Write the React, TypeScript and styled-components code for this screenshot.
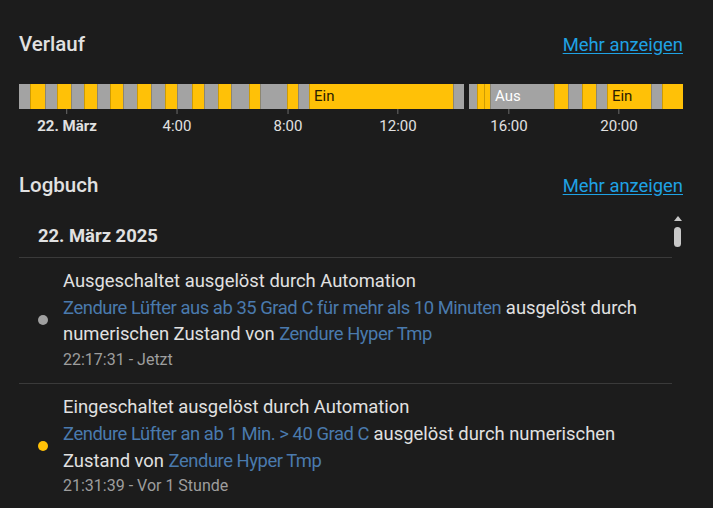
import styled, { createGlobalStyle } from "styled-components";

const GlobalStyle = createGlobalStyle`
    html, body {
        margin: 0;
        padding: 0;
        background: #1c1c1c;
    }
    body {
        font-family: Roboto, "Noto Sans", "Liberation Sans", sans-serif;
        color: #e1e1e1;
    }
`;

type State = "on" | "off" | "gap";

// [start px, end px, state, label]
const segments: [number, number, State, string?][] = [
    [19, 30, "off"],
    [30, 45, "on"],
    [45, 57, "off"],
    [57, 71, "on"],
    [71, 84, "off"],
    [84, 97, "on"],
    [97, 110, "off"],
    [110, 123, "on"],
    [123, 137, "off"],
    [137, 151, "on"],
    [151, 165, "off"],
    [165, 177, "on"],
    [177, 192, "off"],
    [192, 204, "on"],
    [204, 218, "off"],
    [218, 231, "on"],
    [231, 249, "off"],
    [249, 260, "on"],
    [260, 287, "off"],
    [287, 298, "on"],
    [298, 309, "off"],
    [309, 453, "on", "Ein"],
    [453, 464, "off"],
    [464, 469, "gap"],
    [469, 477, "off"],
    [477, 484, "on"],
    [484, 490, "on"],
    [490, 554, "off", "Aus"],
    [554, 568, "on"],
    [568, 582, "off"],
    [582, 596, "on"],
    [596, 607, "off"],
    [607, 651, "on", "Ein"],
    [651, 662, "off"],
    [662, 683, "on"],
];

const BAR_START = 19;
const BAR_WIDTH = 664;

const ticks = [
    { x: 67, label: "22. März", bold: true },
    { x: 177, label: "4:00" },
    { x: 288, label: "8:00" },
    { x: 398, label: "12:00" },
    { x: 509, label: "16:00" },
    { x: 619, label: "20:00" },
];

const entries = [
    {
        state: "off" as const,
        title: "Ausgeschaltet ausgelöst durch Automation",
        link: "Zendure Lüfter aus ab 35 Grad C für mehr als 10 Minuten",
        time: "22:17:31 - Jetzt",
    },
    {
        state: "on" as const,
        title: "Eingeschaltet ausgelöst durch Automation",
        link: "Zendure Lüfter an ab 1 Min. > 40 Grad C",
        time: "21:31:39 - Vor 1 Stunde",
    },
];

const pct = (px: number) => `${(px / BAR_WIDTH) * 100}%`;

export default function App() {
    return (
        <>
            <GlobalStyle />
            <Page>
                <SectionHeader>
                    <Title>Verlauf</Title>
                    <MoreLink href="#">Mehr anzeigen</MoreLink>
                </SectionHeader>

                <Bar>
                    {segments.map(([a, b, s, label], i) => (
                        <Segment
                            key={i}
                            $state={s}
                            $edge={i > 0 && segments[i - 1][2] !== "gap" && s !== "gap"}
                            $labelled={!!label}
                            style={{ width: pct(b - a) }}
                        >
                            {label}
                        </Segment>
                    ))}
                </Bar>
                <Axis>
                    {ticks.map((t) => (
                        <Tick key={t.label} style={{ left: pct(t.x - BAR_START) }}>
                            <TickMark />
                            <TickLabel $bold={t.bold}>{t.label}</TickLabel>
                        </Tick>
                    ))}
                </Axis>

                <SectionHeader $spaced>
                    <Title>Logbuch</Title>
                    <MoreLink href="#">Mehr anzeigen</MoreLink>
                </SectionHeader>

                <LogArea>
                    <LogList>
                        <DateRow>22. März 2025</DateRow>
                        {entries.map((e, i) => (
                            <Entry key={i} $last={i === entries.length - 1}>
                                <Dot $state={e.state} />
                                <EntryBody>
                                    <Message>
                                        {e.title}
                                        <br />
                                        <EntityLink>{e.link}</EntityLink> ausgelöst durch
                                        numerischen Zustand von{" "}
                                        <EntityLink>Zendure Hyper Tmp</EntityLink>
                                    </Message>
                                    <Time>{e.time}</Time>
                                </EntryBody>
                            </Entry>
                        ))}
                    </LogList>
                    <ScrollTrack>
                        <ScrollArrow />
                        <ScrollThumb />
                    </ScrollTrack>
                </LogArea>
            </Page>
        </>
    );
}

const Page = styled.div`
    min-height: 100vh;
    box-sizing: border-box;
    padding: 28px 30px 0 19px;
    background: #1c1c1c;
    overflow: hidden;
`;

const SectionHeader = styled.div<{ $spaced?: boolean }>`
    display: flex;
    align-items: center;
    justify-content: space-between;
    height: 32px;
    margin-top: ${(p) => (p.$spaced ? "30px" : "0")};
`;

const Title = styled.h2`
    margin: 0;
    font-size: 20.5px;
    font-weight: 500;
    color: #e1e1e1;
`;

const MoreLink = styled.a`
    font-size: 18.4px;
    color: #1fa2e4;
    text-decoration: underline;
    text-underline-offset: 2px;
`;

const Bar = styled.div`
    display: flex;
    height: 25px;
    margin-top: 24px;
`;

const Segment = styled.div<{ $state: State; $edge: boolean; $labelled: boolean }>`
    flex: none;
    box-sizing: border-box;
    overflow: hidden;
    white-space: nowrap;
    padding-left: ${(p) => (p.$labelled ? "4px" : "0")};
    font-size: 15px;
    line-height: 25px;
    background: ${(p) =>
        p.$state === "on" ? "#ffc107" : p.$state === "off" ? "#a3a3a3" : "transparent"};
    color: ${(p) => (p.$state === "on" ? "#2a2000" : "#ffffff")};
    border-left: ${(p) => (p.$edge ? "1px solid rgba(90, 70, 0, 0.3)" : "none")};
`;

const Axis = styled.div`
    position: relative;
    height: 30px;
`;

const Tick = styled.div`
    position: absolute;
    top: 0;
    display: flex;
    flex-direction: column;
    align-items: center;
    transform: translateX(-50%);
`;

const TickMark = styled.div`
    width: 1px;
    height: 5px;
    background: #6a6a6a;
`;

const TickLabel = styled.span<{ $bold?: boolean }>`
    margin-top: 3px;
    font-size: 15px;
    line-height: 18px;
    font-weight: ${(p) => (p.$bold ? 700 : 400)};
    color: #e1e1e1;
    white-space: nowrap;
`;

const LogArea = styled.div`
    display: flex;
    margin-top: 12px;
`;

const LogList = styled.div`
    flex: 1;
    min-width: 0;
`;

const DateRow = styled.div`
    display: flex;
    align-items: center;
    height: 44px;
    padding-left: 19px;
    font-size: 18.4px;
    font-weight: 700;
    color: #e1e1e1;
    border-bottom: 1px solid #3a3a3a;
`;

const Entry = styled.div<{ $last: boolean }>`
    display: flex;
    align-items: center;
    gap: 15px;
    padding: 10px 0 12px 19px;
    border-bottom: ${(p) => (p.$last ? "none" : "1px solid #3a3a3a")};
`;

const Dot = styled.span<{ $state: "on" | "off" }>`
    flex: none;
    width: 10px;
    height: 10px;
    border-radius: 50%;
    background: ${(p) => (p.$state === "on" ? "#ffc107" : "#a0a0a0")};
`;

const EntryBody = styled.div`
    flex: 1;
    min-width: 0;
    padding-right: 12px;
`;

const Message = styled.div`
    font-size: 18.4px;
    line-height: 26.7px;
    color: #e1e1e1;
`;

const EntityLink = styled.span`
    color: #4a7aad;
    letter-spacing: -0.45px;
`;

const Time = styled.div`
    font-size: 16px;
    line-height: 23px;
    color: #9e9e9e;
`;

const ScrollTrack = styled.div`
    flex: none;
    width: 11px;
    display: flex;
    flex-direction: column;
    align-items: center;
    padding-top: 3px;
`;

const ScrollArrow = styled.div`
    width: 0;
    height: 0;
    border-left: 4px solid transparent;
    border-right: 4px solid transparent;
    border-bottom: 5px solid #c8c8c8;
`;

const ScrollThumb = styled.div`
    margin-top: 6px;
    width: 7px;
    height: 20px;
    border-radius: 4px;
    background: #c8c8c8;
`;
